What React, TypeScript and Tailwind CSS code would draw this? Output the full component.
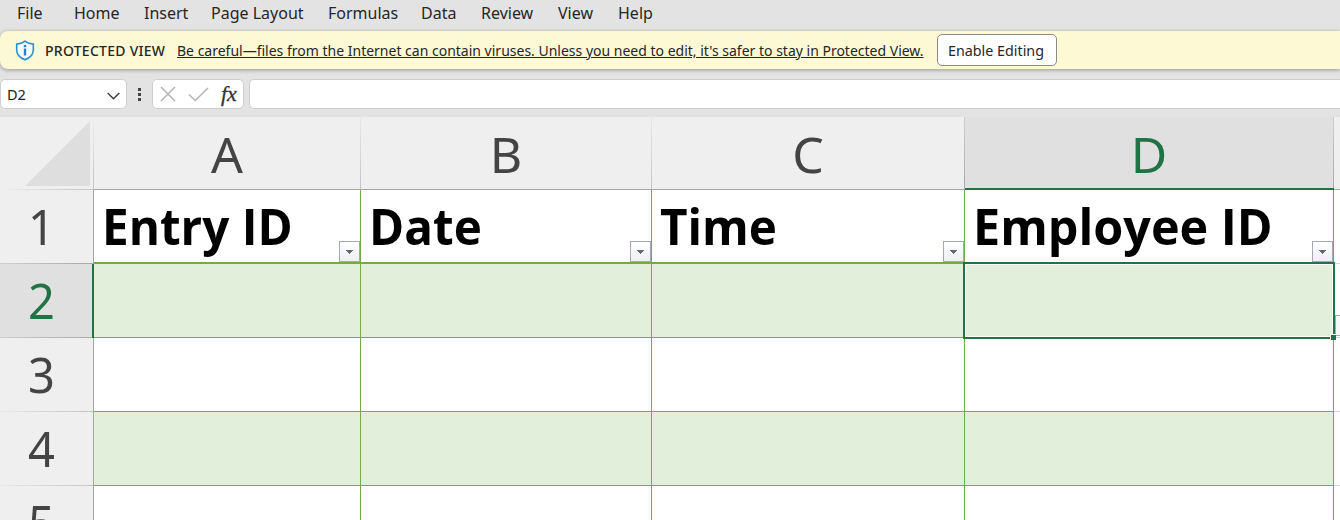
import React from "react";

type MenuEntry = { label: string; box: string };

const menu: MenuEntry[] = [
  { label: "File", box: "w-[57px]" },
  { label: "Home", box: "w-[70px]" },
  { label: "Insert", box: "w-[67px]" },
  { label: "Page Layout", box: "w-[117px]" },
  { label: "Formulas", box: "w-[93px]" },
  { label: "Data", box: "w-[60px]" },
  { label: "Review", box: "w-[77px]" },
  { label: "View", box: "w-[60px]" },
  { label: "Help", box: "w-[60px]" },
];

const columns = [
  { letter: "A", title: "Entry ID", scale: "scale-x-[0.952]" },
  { letter: "B", title: "Date", scale: "scale-x-[0.952]" },
  { letter: "C", title: "Time", scale: "scale-x-[0.952]" },
  { letter: "D", title: "Employee ID", scale: "scale-x-[0.97]" },
];

const gridCols = "grid grid-cols-[94px_267px_291px_313px_369px_6px]";

function FilterButton() {
  return (
    <span className="absolute bottom-0 right-0 flex h-[21px] w-[21px] items-center justify-center border border-[#a6a9b4] bg-linear-to-b from-white to-[#eceff6]">
      <svg width="7" height="4" viewBox="0 0 7 4" shapeRendering="crispEdges">
        <path d="M0 0h7v1H6v1H5v1H4v1H3V3H2V2H1V1H0z" fill="#66686e" />
      </svg>
    </span>
  );
}

function RowHead({ n, active = false }: { n: number; active?: boolean }) {
  return (
    <div
      className={
        active
          ? "flex h-full flex-col border-r-2 border-[#217346] bg-[#e0e0e0] text-[#217346]"
          : "flex h-full flex-col border-r border-[#a6a6a6] bg-[#efefef] text-[#444444]"
      }
    >
      <div className="flex min-h-0 flex-1 items-start pl-[28px]">
        <span className="inline-block origin-left scale-x-94 text-[50px] leading-[72px]">{n}</span>
      </div>
      <div
        className={
          n <= 2
            ? "h-px shrink-0 bg-linear-to-r from-[#cfcfcf] to-[#a8a8a8]"
            : "h-px shrink-0 bg-linear-to-r from-[#e9e9e9] to-[#c3c3c3]"
        }
      />
    </div>
  );
}

export default function App() {
  return (
    <div className="flex h-[520px] w-[1340px] flex-col overflow-hidden bg-[#e3e3e3] font-['Noto_Sans','Open_Sans',sans-serif] text-[#262626]">
      <nav className="flex h-[31px] shrink-0 pl-[17px] text-[16px] leading-[26px]">
        {menu.map((m) => (
          <div key={m.label} className={m.box}>
            {m.label}
          </div>
        ))}
      </nav>

      <div className="flex h-[38px] shrink-0 items-center rounded-l-[8px] bg-[#fdf9d5] pl-[15px] text-[14px] shadow-[0_1px_4px_rgba(0,0,0,0.35)]">
        <svg width="20" height="21" viewBox="0 0 20 21" fill="none">
          <path d="M10 1.2C7.600 3.200 4.800 4 1.700 4.100V10c0 4.800 3 7.800 8.300 9.800 5.300-2 8.300-5 8.300-9.800V4.100C15.200 4 12.400 3.200 10 1.200z" fill="#fafcfd" stroke="#2c8fd0" strokeWidth="1.600" />
          <path d="M8.800 8.500h2.400v7H8.800zM8.800 5h2.400v2.200H8.800z" fill="#1e86cc" />
        </svg>
        <div className="ml-[10px] w-[132px]">
          <span className="inline-block origin-left whitespace-nowrap font-medium tracking-[0.26px]">PROTECTED VIEW</span>
        </div>
        <div className="w-[760px] whitespace-nowrap underline">
          Be careful—files from the Internet can contain viruses. Unless you need to edit, it's safer to stay in Protected View.
        </div>
        <button className="flex h-[32px] w-[120px] items-center justify-center whitespace-nowrap rounded-[5px] border border-[#8a8a8a] bg-white pr-[2px] pt-[1px] text-[14.3px]">
          Enable Editing
        </button>
      </div>

      <div className="flex h-[48px] shrink-0 items-start pt-[10px]">
        <div className="flex h-[30px] w-[127px] items-center justify-between rounded-[5px] border border-[#cecece] bg-white pl-[6px] pr-[6px] text-[14.5px] text-[#222]">
          <span className="pt-[1px]">D2</span>
          <svg className="mt-[3px]" width="13" height="8" viewBox="0 0 13 8" fill="none" stroke="#3b3b3b" strokeWidth="1.400">
            <path d="M0.700 0.900l5.800 5.800 5.800-5.800" />
          </svg>
        </div>
        <svg className="ml-[10px] mt-[9px]" width="5" height="14" viewBox="0 0 5 14" fill="#444">
          <path d="M1 0h3v3H1zM1 5h3v3H1zM1 10h3v3H1z" />
        </svg>
        <div className="ml-[10px] flex h-[30px] w-[92px] items-center rounded-[5px] border border-[#cecece] bg-white pl-[7px]">
          <svg width="16" height="16" viewBox="0 0 16 16" fill="none" stroke="#b3b3b3" strokeWidth="1.500">
            <path d="M1 1l14 14M15 1L1 15" />
          </svg>
          <svg className="ml-[12px]" width="21" height="15" viewBox="0 0 21 15" fill="none" stroke="#b3b3b3" strokeWidth="1.500">
            <path d="M1 7.500l6.300 6L20 1" />
          </svg>
          <span className="ml-[12px] font-['Liberation_Serif',serif] text-[22px] italic leading-none text-[#333] [-webkit-text-stroke:0.3px_#333]">fx</span>
        </div>
        <div className="ml-[5px] h-[30px] flex-1 rounded-l-[5px] border border-r-0 border-[#cecece] bg-white" />
      </div>

      <div className={`${gridCols} h-[73px] shrink-0 grid-rows-[73px] bg-[#efefef]`}>
        <div className="flex h-full flex-col">
          <div className="flex flex-1">
            <svg className="ml-[25px] mt-[4px]" width="65" height="65" viewBox="0 0 65 65">
              <path d="M65 0V65H0z" fill="#dedede" />
            </svg>
            <div className="ml-[3px] w-px bg-linear-to-b from-[#efefef] to-[#c3c3c3]" />
          </div>
          <div className="h-px bg-linear-to-r from-[#efefef] to-[#c3c3c3]" />
        </div>
        {columns.map((c) => (
          <div
            key={c.letter}
            className={c.letter === "D" ? "flex flex-col bg-[#e0e0e0] text-[#217346]" : "flex flex-col text-[#444444]"}
          >
            <div className="flex min-h-0 flex-1">
              <div className="flex flex-1 justify-center pt-[3px]">
                <span className="inline-block text-[50px] leading-[68px]">{c.letter}</span>
              </div>
              <div
                className={
                  c.letter === "C" || c.letter === "D"
                    ? "w-px bg-linear-to-b from-[#cfcfcf] to-[#a8a8a8]"
                    : "w-px bg-linear-to-b from-[#e9e9e9] to-[#c3c3c3]"
                }
              />
            </div>
            <div className={c.letter === "D" ? "h-[2px] shrink-0 bg-[#217346]" : "h-px shrink-0 bg-[#a6a6a6]"} />
          </div>
        ))}
        <div className="border-b border-[#a6a6a6]" />
      </div>

      <div className={`${gridCols} h-[74px] shrink-0 grid-rows-[74px] bg-white`}>
        <RowHead n={1} />
        {columns.map((c) => (
          <div key={c.letter} className="relative border-b-2 border-r border-[#70ad47] pl-[8px]">
            <span className={`inline-block origin-left whitespace-nowrap font-['Open_Sans',sans-serif] text-[50px] font-bold leading-[72px] text-black ${c.scale}`}>
              {c.title}
            </span>
            <FilterButton />
          </div>
        ))}
        <div className="border-b border-[#d6d6d6]" />
      </div>

      <div className={`${gridCols} relative h-[74px] shrink-0 grid-rows-[74px] bg-white`}>
        <RowHead n={2} active />
        {columns.map((c) => (
          <div key={c.letter} className="border-b border-r border-[#70ad47] bg-[#e2efda]" />
        ))}
        <div className="flex items-end border-b border-[#d6d6d6] pl-[1px]">
          <div className="mb-[1px] h-[21px] w-[5px] border border-r-0 border-[#a6a9b4] bg-[#f7f8fb]" />
        </div>
        <div className="absolute left-[963px] top-[-2px] z-10 h-[77px] w-[372px] border-2 border-[#217346]">
          <div className="h-full w-full border border-white" />
        </div>
        <div className="absolute left-[1330px] top-[70px] z-20 h-[6px] w-[6px] border-l border-t border-white bg-[#217346]" />
      </div>

      {[3, 4].map((n) => (
        <div key={n} className={`${gridCols} h-[74px] shrink-0 grid-rows-[74px] bg-white`}>
          <RowHead n={n} />
          {columns.map((c) => (
            <div
              key={c.letter}
              className={n === 4 ? "border-b border-r border-[#70ad47] bg-[#e2efda]" : "border-b border-r border-[#70ad47]"}
            />
          ))}
          <div className="border-b border-[#d6d6d6]" />
        </div>
      ))}

      <div className={`${gridCols} h-[74px] shrink-0 grid-rows-[74px] bg-white`}>
        <RowHead n={5} />
        {columns.map((c) => (
          <div key={c.letter} className="border-r border-[#70ad47]" />
        ))}
        <div />
      </div>
    </div>
  );
}
